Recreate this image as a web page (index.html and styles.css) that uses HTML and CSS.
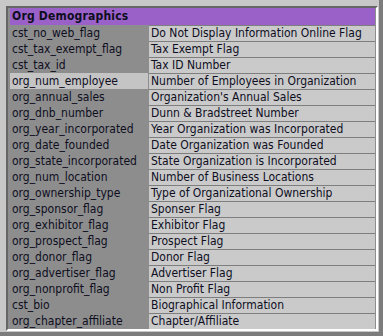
FILE: index.html
```html
<!DOCTYPE html>
<html>
<head>
<meta charset="utf-8">
<link rel="stylesheet" href="styles.css">
</head>
<body>
<div class="frame">
  <div class="panel">
    <div class="header">Org Demographics</div>
    <div class="rows">
      <div class="row"><div class="key">cst_no_web_flag</div><div class="val">Do Not Display Information Online Flag</div></div>
      <div class="row"><div class="key">cst_tax_exempt_flag</div><div class="val">Tax Exempt Flag</div></div>
      <div class="row"><div class="key">cst_tax_id</div><div class="val">Tax ID Number</div></div>
      <div class="row selected"><div class="key">org_num_employee</div><div class="val">Number of Employees in Organization</div></div>
      <div class="row"><div class="key">org_annual_sales</div><div class="val">Organization's Annual Sales</div></div>
      <div class="row"><div class="key">org_dnb_number</div><div class="val">Dunn &amp; Bradstreet Number</div></div>
      <div class="row"><div class="key">org_year_incorporated</div><div class="val">Year Organization was Incorporated</div></div>
      <div class="row"><div class="key">org_date_founded</div><div class="val">Date Organization was Founded</div></div>
      <div class="row"><div class="key">org_state_incorporated</div><div class="val">State Organization is Incorporated</div></div>
      <div class="row"><div class="key">org_num_location</div><div class="val">Number of Business Locations</div></div>
      <div class="row"><div class="key">org_ownership_type</div><div class="val">Type of Organizational Ownership</div></div>
      <div class="row"><div class="key">org_sponsor_flag</div><div class="val">Sponser Flag</div></div>
      <div class="row"><div class="key">org_exhibitor_flag</div><div class="val">Exhibitor Flag</div></div>
      <div class="row"><div class="key">org_prospect_flag</div><div class="val">Prospect Flag</div></div>
      <div class="row"><div class="key">org_donor_flag</div><div class="val">Donor Flag</div></div>
      <div class="row"><div class="key">org_advertiser_flag</div><div class="val">Advertiser Flag</div></div>
      <div class="row"><div class="key">org_nonprofit_flag</div><div class="val">Non Profit Flag</div></div>
      <div class="row"><div class="key">cst_bio</div><div class="val">Biographical Information</div></div>
      <div class="row"><div class="key">org_chapter_affiliate</div><div class="val">Chapter/Affiliate</div></div>
    </div>
  </div>
</div>
</body>
</html>
```
FILE: styles.css
```css
html, body {
  margin: 0;
  padding: 0;
  background: #c8c8c8;
}
.frame {
  width: 383px;
  height: 336px;
  box-sizing: border-box;
  background: #c8c8c8;
  border-right: 4px solid #7c7c7c;
  border-bottom: 4px solid #7c7c7c;
  padding: 6px 1px 1px 6px;
  font-family: "DejaVu Sans Condensed", "DejaVu Sans", sans-serif;
  font-size: 12px;
  color: #0e0e1e;
}
.panel {
  height: 100%;
  box-sizing: border-box;
  border-style: solid;
  border-width: 2px;
  border-color: #666666 #ffffff #ffffff #666666;
  background: #8d8d8d;
  padding: 0 1px 0 2px;
  display: flex;
  flex-direction: column;
}
.header {
  height: 17px;
  line-height: 17px;
  background: #9a62c8;
  font-weight: bold;
  letter-spacing: 0.2px;
  padding-left: 2px;
}
.rows {
  display: flex;
  flex-direction: column;
}
.row {
  display: flex;
  height: 16px;
}
.key {
  width: 138px;
  flex: none;
  box-sizing: border-box;
  padding-left: 2px;
  line-height: 16px;
  white-space: nowrap;
}
.val {
  flex: 1;
  margin-left: 1px;
  background: #cacaca;
  border-top: 1px solid #7e7e7e;
  line-height: 15px;
  padding-left: 2px;
  white-space: nowrap;
}
.selected .key {
  background: #c4c4c4;
}
```
